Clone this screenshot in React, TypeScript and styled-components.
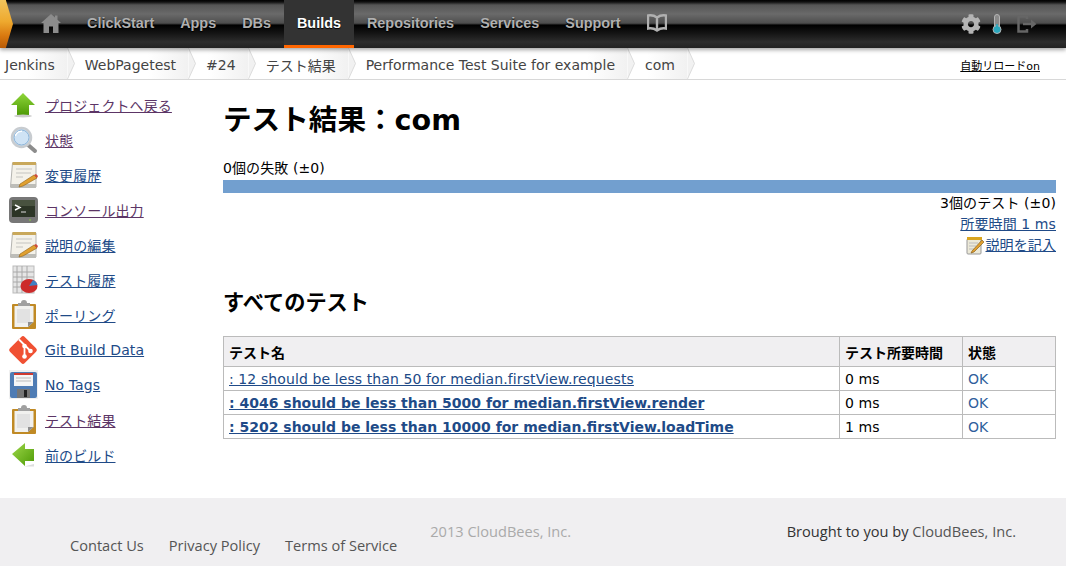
import React from "react";
import styled, { createGlobalStyle } from "styled-components";
import { FaCog } from "react-icons/fa";

const bodyFont = `"DejaVu Sans", "Noto Sans CJK JP", sans-serif`;
const blue = "#204a87";
const purple = "#5c3566";

const GlobalStyle = createGlobalStyle`
  html, body {
    margin: 0;
    padding: 0;
    height: 100%;
    overflow: hidden;
    background: #fff;
  }
  body {
    font-family: ${bodyFont};
    font-size: 14px;
    letter-spacing: 0.1px;
    color: #000;
  }
`;

const Page = styled.div`
  height: 100vh;
  display: flex;
  flex-direction: column;
`;

const TopBar = styled.header`
  height: 48px;
  flex: none;
  display: flex;
  align-items: stretch;
  position: relative;
  z-index: 2;
  box-shadow: 0 2px 4px rgba(0, 0, 0, 0.35);
  background: linear-gradient(
    to bottom,
    #000 0,
    #111 2px,
    #555 5px,
    #6a6a6a 14px,
    #4e4e4e 23px,
    #333 24px,
    #000 25px,
    #111 32px,
    #2d2d2d 42px,
    #222 48px
  );
`;

const Logo = styled.div`
  width: 13px;
  flex: none;
  margin-right: 15px;
  clip-path: polygon(0 0, 45% 0, 100% 50%, 45% 100%, 0 100%);
  background: linear-gradient(to bottom, #f2c45c 0, #eea92e 45%, #d9780f 75%, #b85b06 100%);
`;

const NavItem = styled.a<{ $active?: boolean }>`
  display: flex;
  align-items: center;
  padding: 0 13px;
  box-sizing: border-box;
  font-family: "Liberation Sans", Arial, sans-serif;
  font-size: 14.4px;
  letter-spacing: 0;
  font-weight: bold;
  color: ${(props) => (props.$active ? "#fff" : "#b0b0b0")};
  text-shadow: 0 1px 1px #000;
  background: ${(props) => (props.$active ? "#333" : "transparent")};
  border-bottom: 3px solid ${(props) => (props.$active ? "#f60" : "transparent")};
`;

const BarIcons = styled.div`
  margin-left: auto;
  padding-right: 29px;
  display: flex;
  align-items: center;
  gap: 11px;
  color: #b4b4b4;
`;

const Crumbs = styled.nav`
  height: 32px;
  flex: none;
  box-sizing: border-box;
  border-bottom: 1px solid #d8d8d8;
  display: flex;
  align-items: stretch;
  overflow: hidden;
`;

const Crumb = styled.a<{ $first?: boolean }>`
  display: flex;
  align-items: center;
  padding: 2px 12px 0 ${(props) => (props.$first ? "5px" : "10px")};
  font-size: 14px;
  letter-spacing: 0;
  color: #444;
  white-space: nowrap;
  background: linear-gradient(to right, #fff calc(100% - 40px), #f1f1f1 100%);
`;

const CrumbTip = styled.svg`
  width: 8px;
  height: 31px;
  flex: none;
  display: block;
`;

const AutoReload = styled.a`
  margin-left: auto;
  margin-right: 26px;
  padding-top: 2px;
  align-self: center;
  font-size: 11px;
  letter-spacing: 0;
  color: #000;
  text-decoration: underline;
`;

const Content = styled.div`
  flex: 1;
  display: flex;
  min-height: 0;
`;

const Side = styled.aside`
  width: 223px;
  flex: none;
  box-sizing: border-box;
  padding: 7px 0 0 9px;
`;

const Task = styled.div`
  height: 35px;
  display: flex;
  align-items: center;
  gap: 7px;
`;

const IconBox = styled.span`
  width: 29px;
  height: 30px;
  flex: none;
  display: block;

  svg {
    display: block;
    overflow: visible;
  }
`;

const Link = styled.a<{ $visited?: boolean }>`
  color: ${(props) => (props.$visited ? purple : blue)};
  text-decoration: underline;
`;

const Main = styled.main`
  flex: 1;
  min-width: 0;
  padding: 0 10px 0 0;
`;

const Title = styled.h1`
  margin: 21px 0 0;
  font-size: 28.6px;
  letter-spacing: 0;
  line-height: 38px;
  font-weight: bold;
`;

const Summary = styled.div`
  margin-top: 19px;
  line-height: 20px;
`;

const Bar = styled.div`
  height: 13px;
  background: #729fcf;
  margin-top: 2px;
`;

const RightLine = styled.div`
  text-align: right;
  line-height: 21px;
  height: 21px;
  display: flex;
  justify-content: flex-end;
  align-items: center;
`;

const SubTitle = styled.h2`
  margin: 33px 0 0;
  font-size: 21.2px;
  letter-spacing: 0;
  line-height: 28px;
  font-weight: bold;
`;

const ResultTable = styled.table`
  margin-top: 19px;
  width: 832px;
  table-layout: fixed;
  border-collapse: collapse;
`;

const HeadCell = styled.th`
  height: 30px;
  box-sizing: border-box;
  padding: 0 5px;
  background: #f0eff1;
  border: 1px solid #bbb;
  text-align: left;
  font-size: 14px;
  letter-spacing: 0;
  font-weight: bold;
`;

const Cell = styled.td<{ $strong?: boolean }>`
  height: 24px;
  box-sizing: border-box;
  padding: 0 5px;
  border: 1px solid #bbb;
  font-weight: ${(props) => (props.$strong ? "bold" : "normal")};
  letter-spacing: ${(props) => (props.$strong ? "0" : "0.1px")};
  white-space: nowrap;
  overflow: hidden;
`;

const Status = styled.a`
  color: #2f5f9c;
`;

const Footer = styled.footer`
  height: 68px;
  flex: none;
  display: flex;
  background: #f0eff1;
  font-family: "Open Sans", sans-serif;
  font-size: 14.6px;
  letter-spacing: 0;
  line-height: 20px;
`;

const FooterLinks = styled.div`
  display: flex;
  gap: 25px;
  padding: 37px 0 0 70px;
  color: #555;
`;

const Copyright = styled.div`
  padding: 23px 0 0 33px;
  color: #aaa;
`;

const Brought = styled.div`
  margin-left: auto;
  padding: 23px 50px 0 0;
  color: #333;
`;

const FooterName = styled.span`
  color: #555;
`;

/* sidebar pictures */

const ArrowUp = () => (
  <svg width="29" height="30" viewBox="0 0 29 30">
    <defs>
      <linearGradient id="up" x1="0" y1="0" x2="0" y2="1">
        <stop offset="0" stopColor="#8fd63a" />
        <stop offset="1" stopColor="#4e9a06" />
      </linearGradient>
    </defs>
    <path d="M14 3 L26 15 H20 V25 H8 V15 H2 Z" fill="url(#up)" />
    <ellipse cx="14" cy="26" rx="9" ry="1.4" fill="#ccc" />
  </svg>
);

const ArrowLeft = () => (
  <svg width="29" height="30" viewBox="0 0 29 30">
    <defs>
      <linearGradient id="left" x1="0" y1="0" x2="1" y2="1">
        <stop offset="0" stopColor="#9ed84a" />
        <stop offset="1" stopColor="#4e9a06" />
      </linearGradient>
    </defs>
    <path d="M3 14 L16 3 V9 H25 V21 H16 V26 Z" fill="url(#left)" />
    <path d="M15 26.5 H25 V24 Z" fill="#ddd" />
  </svg>
);

const Magnifier = () => (
  <svg width="29" height="30" viewBox="0 0 29 30">
    <path d="M18 19 L26 26" stroke="#8c8c8c" strokeWidth="4" strokeLinecap="round" />
    <circle cx="12.5" cy="12.5" r="9.5" fill="#cfe3f5" stroke="#c8ccd0" strokeWidth="2.5" />
    <path d="M6 11 A7 7 0 0 1 13 6" stroke="#fff" strokeWidth="2" fill="none" />
    <circle cx="12.5" cy="12.5" r="7.5" fill="none" stroke="#8cb4d8" strokeWidth="1" />
  </svg>
);

const Notepad = () => (
  <svg width="29" height="30" viewBox="0 0 29 30">
    <path d="M1.5 27 L3.5 3 H27 L27 27 Z" fill="#f4f2ea" stroke="#b4b4b0" />
    <rect x="3.5" y="2" width="23.5" height="3" fill="#c9a85a" />
    <path d="M7 9 H23 M7 13 H22 M7 17 H14" stroke="#c4c4c0" strokeWidth="1" />
    <path d="M1.5 24 H27 V28 H1.5 Z" fill="#bdbdb8" />
    <path d="M11 24 L25 15 L28 18 L14 26 L10 27 Z" fill="#e0a030" stroke="#8f5e12" strokeWidth="0.6" />
    <path d="M25 15 L28 18 L29 16 L27 14 Z" fill="#d04a3a" />
  </svg>
);

const Terminal = () => (
  <svg width="29" height="30" viewBox="0 0 29 30">
    <rect x="0" y="2" width="29" height="26" rx="4" fill="#777" />
    <rect x="3" y="5" width="23" height="17" fill="#2c3526" />
    <path d="M3 5 H26 V11 H3 Z" fill="#48523f" />
    <path d="M6 10 L11 12.5 L6 15" stroke="#fff" strokeWidth="1.4" fill="none" />
    <path d="M12 17 H17" stroke="#ddd" strokeWidth="1" />
    <circle cx="21" cy="25" r="0.8" fill="#8ae234" />
  </svg>
);

const History = () => (
  <svg width="29" height="30" viewBox="0 0 29 30">
    <rect x="4" y="1" width="21" height="27" fill="#e6e6e6" stroke="#bbb" />
    <path d="M8 1 V28 M13 1 V28 M18 1 V28 M4 7 H25 M4 12 H25 M4 17 H25 M4 22 H25" stroke="#a8a8a8" strokeWidth="1" />
    <ellipse cx="20" cy="21" rx="8.5" ry="7" fill="#cc2a2a" />
    <path d="M20 21 L24 15 A8.5 7 0 0 1 28.5 20 Z" fill="#3f7fc4" />
  </svg>
);

const Clipboard = () => (
  <svg width="29" height="30" viewBox="0 0 29 30">
    <rect x="3" y="4" width="24" height="25" fill="#c08a25" rx="1" />
    <path d="M5.5 6 H24.5 V22 L19 27 H5.5 Z" fill="#f1f1ef" />
    <rect x="8" y="9" width="13" height="14" fill="#e2e2e2" />
    <path d="M24.5 22 L19 27 V22 Z" fill="#8f8f8f" />
    <path d="M9 6 V3 H12 Q12 0 15 0 Q18 0 18 3 H21 V6 Z" fill="#a0a0a0" />
  </svg>
);

const GitLogo = () => (
  <svg width="29" height="30" viewBox="0 0 29 30">
    <rect x="3.5" y="4.5" width="21" height="21" rx="2.5" fill="#f05133" transform="rotate(45 14 15)" />
    <path d="M10 4.5 L21 15.5 M15.5 10.5 V22" stroke="#fff" strokeWidth="1.8" />
    <circle cx="15.5" cy="11" r="2.3" fill="#fff" />
    <circle cx="15.5" cy="21.5" r="2.3" fill="#fff" />
    <circle cx="21.5" cy="16" r="2.3" fill="#fff" />
  </svg>
);

const Floppy = () => (
  <svg width="29" height="30" viewBox="0 0 29 30">
    <rect x="0" y="0" width="29" height="29" fill="#f0f0f0" />
    <rect x="1" y="2" width="27" height="26" rx="2" fill="#4f7cb4" />
    <rect x="5" y="3" width="19" height="13" fill="#f6f6f6" />
    <rect x="5" y="3" width="19" height="2" fill="#d03a30" />
    <path d="M7 8 H22 M7 11 H22" stroke="#bbb" strokeWidth="1" />
    <rect x="8" y="19" width="13" height="9" fill="#777" />
    <rect x="15" y="20" width="3" height="7" fill="#222" />
  </svg>
);

const SmallNote = () => (
  <svg width="19" height="19" viewBox="0 0 19 19" style={{ marginRight: 1 }}>
    <rect x="1" y="3" width="14" height="15" rx="1" fill="#ece9d8" stroke="#999" />
    <rect x="1" y="1" width="15" height="3" fill="#d9a520" />
    <path d="M3 7 H12 M3 10 H10 M3 13 H8" stroke="#bbb" />
    <path d="M6 15 L16 4 L18 6 L8 16 L5 17 Z" fill="#e0a030" stroke="#7a5310" strokeWidth="0.6" />
  </svg>
);

const tasks = [
  { label: "プロジェクトへ戻る", icon: <ArrowUp />, visited: true },
  { label: "状態", icon: <Magnifier />, visited: true },
  { label: "変更履歴", icon: <Notepad /> },
  { label: "コンソール出力", icon: <Terminal />, visited: true },
  { label: "説明の編集", icon: <Notepad /> },
  { label: "テスト履歴", icon: <History /> },
  { label: "ポーリング", icon: <Clipboard /> },
  { label: "Git Build Data", icon: <GitLogo /> },
  { label: "No Tags", icon: <Floppy /> },
  { label: "テスト結果", icon: <Clipboard />, visited: true },
  { label: "前のビルド", icon: <ArrowLeft /> },
];

const crumbs = ["Jenkins", "WebPagetest", "#24", "テスト結果", "Performance Test Suite for example", "com"];

const rows = [
  { name: ": 12 should be less than 50 for median.firstView.requests", time: "0 ms", strong: false },
  { name: ": 4046 should be less than 5000 for median.firstView.render", time: "0 ms", strong: true },
  { name: ": 5202 should be less than 10000 for median.firstView.loadTime", time: "1 ms", strong: true },
];

const App = () => {
  return (
    <Page>
      <GlobalStyle />
      <TopBar>
        <Logo />
        <NavItem>
          <svg width="20" height="20" viewBox="0 0 20 20" fill="#8c8c8c">
            <path d="M10 1 L14 4.6 V2.5 H16.5 V6.8 L20 10 H17.5 V20 H12 V13.5 H8 V20 H2.5 V10 H0 Z" />
          </svg>
        </NavItem>
        <NavItem>ClickStart</NavItem>
        <NavItem>Apps</NavItem>
        <NavItem>DBs</NavItem>
        <NavItem $active>Builds</NavItem>
        <NavItem>Repositories</NavItem>
        <NavItem>Services</NavItem>
        <NavItem>Support</NavItem>
        <NavItem>
          <svg width="20" height="18" viewBox="0 0 20 18" fill="none" stroke="#b0b0b0" strokeWidth="2.4">
            <path d="M10 3.5 Q6 0.5 1 1.5 V14.5 Q6 13.5 10 16.5 Q14 13.5 19 14.5 V1.5 Q14 0.5 10 3.5 Z M10 3.5 V16.5" />
          </svg>
        </NavItem>
        <BarIcons>
          <FaCog size={20} />
          <svg width="10" height="20" viewBox="0 0 10 20">
            <rect x="2.5" y="0.5" width="5" height="15" rx="2.5" fill="#8a8a8a" stroke="#b4b4b4" />
            <circle cx="5" cy="15.5" r="4" fill="#2aa7bd" stroke="#b4b4b4" />
            <rect x="4.2" y="10" width="1.6" height="4" fill="#2aa7bd" />
          </svg>
          <svg width="20" height="18" viewBox="0 0 20 18" fill="none" stroke="#666" strokeWidth="2.5" style={{ marginLeft: 4 }}>
            <path d="M10 4 V1.5 H1.5 V16.5 H10 V14" />
            <path d="M6 9 H15" />
            <path d="M14 4.5 L19.5 9 L14 13.5 Z" fill="#666" stroke="none" />
          </svg>
        </BarIcons>
      </TopBar>
      <Crumbs>
        {crumbs.map((crumb, i) => (
          <React.Fragment key={crumb}>
            <Crumb $first={i === 0}>{crumb}</Crumb>
            <CrumbTip viewBox="0 0 8 31">
              <path d="M0.5 0 L7.5 15.5 L0.5 31" fill="#f1f1f1" stroke="#dcdcdc" />
            </CrumbTip>
          </React.Fragment>
        ))}
        <AutoReload>自動リロードon</AutoReload>
      </Crumbs>
      <Content>
        <Side>
          {tasks.map((task) => (
            <Task key={task.label}>
              <IconBox>{task.icon}</IconBox>
              <Link $visited={task.visited}>{task.label}</Link>
            </Task>
          ))}
        </Side>
        <Main>
          <Title>テスト結果：com</Title>
          <Summary>0個の失敗 (±0)</Summary>
          <Bar />
          <RightLine>3個のテスト (±0)</RightLine>
          <RightLine>
            <Link>所要時間 1 ms</Link>
          </RightLine>
          <RightLine>
            <SmallNote />
            <Link>説明を記入</Link>
          </RightLine>
          <SubTitle>すべてのテスト</SubTitle>
          <ResultTable>
            <colgroup>
              <col style={{ width: 616 }} />
              <col style={{ width: 123 }} />
              <col style={{ width: 93 }} />
            </colgroup>
            <thead>
              <tr>
                <HeadCell>テスト名</HeadCell>
                <HeadCell>テスト所要時間</HeadCell>
                <HeadCell>状態</HeadCell>
              </tr>
            </thead>
            <tbody>
              {rows.map((row) => (
                <tr key={row.name}>
                  <Cell $strong={row.strong}>
                    <Link>{row.name}</Link>
                  </Cell>
                  <Cell>{row.time}</Cell>
                  <Cell>
                    <Status>OK</Status>
                  </Cell>
                </tr>
              ))}
            </tbody>
          </ResultTable>
        </Main>
      </Content>
      <Footer>
        <FooterLinks>
          <span>Contact Us</span>
          <span>Privacy Policy</span>
          <span>Terms of Service</span>
        </FooterLinks>
        <Copyright>2013 CloudBees, Inc.</Copyright>
        <Brought>
          Brought to you by <FooterName>CloudBees, Inc.</FooterName>
        </Brought>
      </Footer>
    </Page>
  );
};

export default App;
